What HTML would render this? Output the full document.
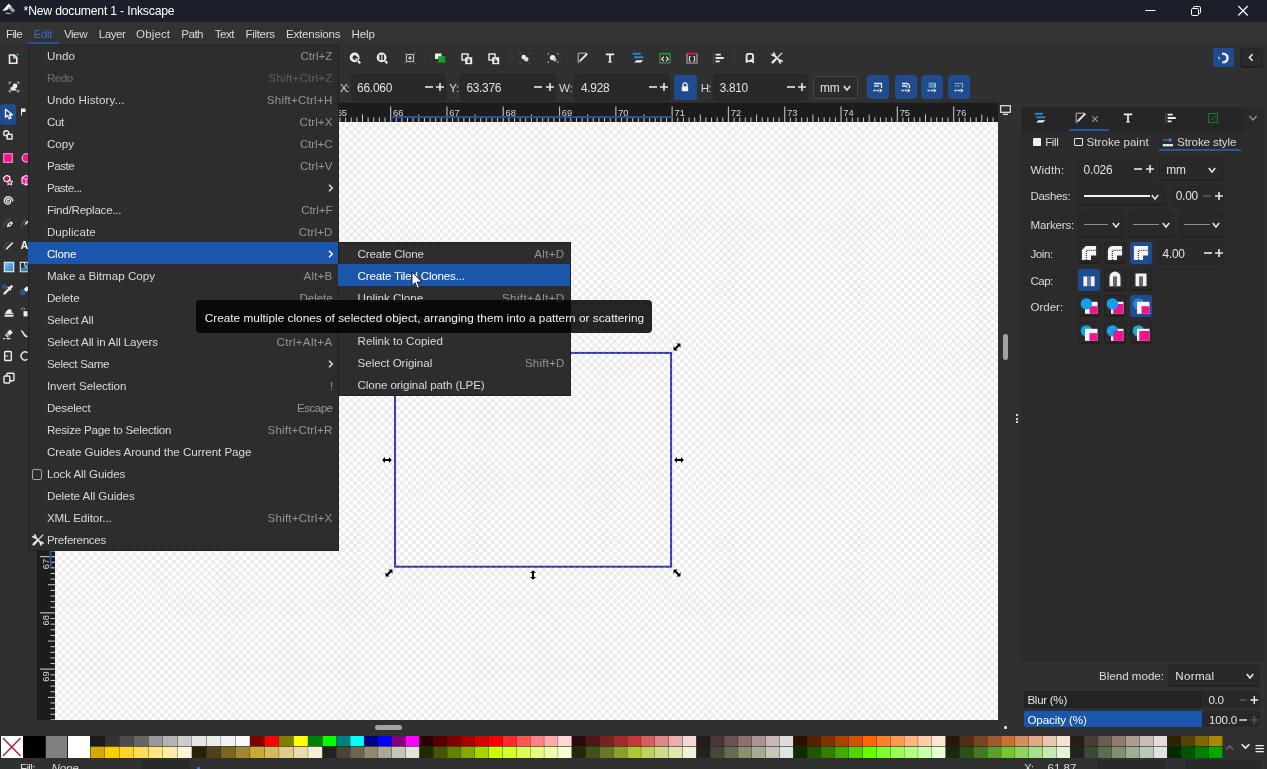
<!DOCTYPE html>
<html><head><meta charset="utf-8"><title>*New document 1 - Inkscape</title>
<style>
html,body{margin:0;padding:0;background:#303030;}
body{width:1267px;height:769px;overflow:hidden;position:relative;font-family:"Liberation Sans",sans-serif;}
#r{position:absolute;left:0;top:0;width:1267px;height:769px;overflow:hidden;background:#303030;will-change:transform;}
#r div,#r span,#r svg{position:absolute;box-sizing:border-box;}
.t{white-space:nowrap;}
</style></head><body><div id="r">
<div style="left:0px;top:0px;width:1267px;height:22px;background:#1b1f2a;"></div>
<span class="t" style="left:23.60px;top:3.30px;font-size:12.2px;line-height:16px;color:#ffffff;letter-spacing:-0.191px;">*New document 1 - Inkscape</span>
<svg style="left:1140px;top:0" width="127" height="22" viewBox="0 0 127 22"><path d="M5.500 10.500h10" stroke="#fff" stroke-width="1" fill="none"/><rect x="51.500" y="8.500" width="7" height="7" rx="1.200" stroke="#fff" stroke-width="1" fill="none"/><path d="M53.500 8.500v-0.800a1.200 1.200 0 0 1 1.200 -1.200h4.600a1.200 1.200 0 0 1 1.200 1.200v4.600a1.200 1.200 0 0 1 -1.200 1.200h-0.800" stroke="#fff" stroke-width="1" fill="none"/><path d="M98.300 6l9.500 9.500M107.800 6l-9.500 9.500" stroke="#fff" stroke-width="1.100" fill="none"/></svg>
<svg style="left:0px;top:0px" width="20" height="20" viewBox="0 0 20 20"><path d="M8.800 3.800L2.700 10.200Q2.400 10.900 3.400 10.800L6.600 10.300L8.800 8.400Z" fill="#f4f6f8"/><path d="M8.800 3.800L15.200 10.400Q15.500 11.300 14.400 11.400L12 12L8.800 8.400Z" fill="#98a3b3"/><path d="M8.800 3.800L11.800 7L10.400 6.600L9.400 7.800L8.200 6.600L6.800 7.400L6 6.800Z" fill="#ffffff"/><path d="M5.600 13.300Q8 12.700 10.500 13.800" stroke="#dfe3e8" stroke-width="0.900" fill="none"/><path d="M11 13.200L13.400 12.600" stroke="#5d6878" stroke-width="0.800" fill="none"/></svg>
<div style="left:0px;top:22px;width:1267px;height:23px;background:#333333;"></div>
<span class="t" style="left:6.00px;top:26.30px;font-size:11.6px;line-height:16px;color:#d9d9d9;letter-spacing:-0.648px;">File</span>
<span class="t" style="left:33.50px;top:26.30px;font-size:11.6px;line-height:16px;color:#3a6cbd;letter-spacing:-0.347px;">Edit</span>
<span class="t" style="left:63.90px;top:26.30px;font-size:11.6px;line-height:16px;color:#d9d9d9;letter-spacing:-0.434px;">View</span>
<span class="t" style="left:98.70px;top:26.30px;font-size:11.6px;line-height:16px;color:#d9d9d9;letter-spacing:-0.444px;">Layer</span>
<span class="t" style="left:136.00px;top:26.30px;font-size:11.6px;line-height:16px;color:#d9d9d9;letter-spacing:0.112px;">Object</span>
<span class="t" style="left:181.30px;top:26.30px;font-size:11.6px;line-height:16px;color:#d9d9d9;letter-spacing:-0.541px;">Path</span>
<span class="t" style="left:214.80px;top:26.30px;font-size:11.6px;line-height:16px;color:#d9d9d9;letter-spacing:-0.544px;">Text</span>
<span class="t" style="left:245.50px;top:26.30px;font-size:11.6px;line-height:16px;color:#d9d9d9;letter-spacing:-0.340px;">Filters</span>
<span class="t" style="left:286.00px;top:26.30px;font-size:11.6px;line-height:16px;color:#d9d9d9;letter-spacing:-0.254px;">Extensions</span>
<span class="t" style="left:351.50px;top:26.30px;font-size:11.6px;line-height:16px;color:#d9d9d9;letter-spacing:-0.114px;">Help</span>
<div style="left:28.4px;top:42.1px;width:30.4px;height:1.7px;background:#23529f;"></div>
<div style="left:37px;top:103px;width:961.4px;height:19px;background:#1c1c1c;"></div>
<div style="left:37px;top:103px;width:18px;height:617px;background:#1c1c1c;"></div>
<div style="left:55px;top:122px;width:943.4px;height:598px;background-color:#fdfdfd;background-image:conic-gradient(#ebebeb 25%,#fdfdfd 0 50%,#ebebeb 0 75%,#fdfdfd 0);background-size:7.890px 7.890px;background-position:2.700px 4.600px"></div>
<svg style="left:37px;top:103px" width="961.4" height="19" viewBox="37 103 961.4 19"><path d="M41.59 117.500V122M47.22 117.500V122M58.48 117.500V122M64.11 117.500V122M69.74 117.500V122M75.37 117.500V122M86.63 117.500V122M92.26 117.500V122M97.89 117.500V122M103.52 117.500V122M114.78 117.500V122M120.41 117.500V122M126.04 117.500V122M131.67 117.500V122M142.93 117.500V122M148.56 117.500V122M154.19 117.500V122M159.82 117.500V122M171.08 117.500V122M176.71 117.500V122M182.34 117.500V122M187.97 117.500V122M199.23 117.500V122M204.86 117.500V122M210.49 117.500V122M216.12 117.500V122M227.38 117.500V122M233.01 117.500V122M238.64 117.500V122M244.27 117.500V122M255.53 117.500V122M261.16 117.500V122M266.79 117.500V122M272.42 117.500V122M283.68 117.500V122M289.31 117.500V122M294.94 117.500V122M300.57 117.500V122M311.83 117.500V122M317.46 117.500V122M323.09 117.500V122M328.72 117.500V122M339.98 117.500V122M345.61 117.500V122M351.24 117.500V122M356.87 117.500V122M368.13 117.500V122M373.76 117.500V122M379.39 117.500V122M385.02 117.500V122M396.28 117.500V122M401.91 117.500V122M407.54 117.500V122M413.17 117.500V122M424.43 117.500V122M430.06 117.500V122M435.69 117.500V122M441.32 117.500V122M452.58 117.500V122M458.21 117.500V122M463.84 117.500V122M469.47 117.500V122M480.73 117.500V122M486.36 117.500V122M491.99 117.500V122M497.62 117.500V122M508.88 117.500V122M514.51 117.500V122M520.14 117.500V122M525.77 117.500V122M537.03 117.500V122M542.66 117.500V122M548.29 117.500V122M553.92 117.500V122M565.18 117.500V122M570.81 117.500V122M576.44 117.500V122M582.07 117.500V122M593.33 117.500V122M598.96 117.500V122M604.59 117.500V122M610.22 117.500V122M621.48 117.500V122M627.11 117.500V122M632.74 117.500V122M638.37 117.500V122M649.63 117.500V122M655.26 117.500V122M660.89 117.500V122M666.52 117.500V122M677.78 117.500V122M683.41 117.500V122M689.04 117.500V122M694.67 117.500V122M705.93 117.500V122M711.56 117.500V122M717.19 117.500V122M722.82 117.500V122M734.08 117.500V122M739.71 117.500V122M745.34 117.500V122M750.97 117.500V122M762.23 117.500V122M767.86 117.500V122M773.49 117.500V122M779.12 117.500V122M790.38 117.500V122M796.01 117.500V122M801.64 117.500V122M807.27 117.500V122M818.53 117.500V122M824.16 117.500V122M829.79 117.500V122M835.42 117.500V122M846.68 117.500V122M852.31 117.500V122M857.94 117.500V122M863.57 117.500V122M874.83 117.500V122M880.46 117.500V122M886.09 117.500V122M891.72 117.500V122M902.98 117.500V122M908.61 117.500V122M914.24 117.500V122M919.87 117.500V122M931.13 117.500V122M936.76 117.500V122M942.39 117.500V122M948.02 117.500V122M959.28 117.500V122M964.91 117.500V122M970.54 117.500V122M976.17 117.500V122M987.43 117.500V122M993.06 117.500V122" stroke="#cdcdcd" stroke-width="1"/><path d="M81.00 114.500V122M137.30 114.500V122M193.60 114.500V122M249.90 114.500V122M306.20 114.500V122M362.50 114.500V122M418.80 114.500V122M475.10 114.500V122M531.40 114.500V122M587.70 114.500V122M644.00 114.500V122M700.30 114.500V122M756.60 114.500V122M812.90 114.500V122M869.20 114.500V122M925.50 114.500V122M981.80 114.500V122" stroke="#cdcdcd" stroke-width="1"/><path d="M52.85 106.500V122M109.15 106.500V122M165.45 106.500V122M221.75 106.500V122M278.05 106.500V122M334.35 106.500V122M390.65 106.500V122M446.95 106.500V122M503.25 106.500V122M559.55 106.500V122M615.85 106.500V122M672.15 106.500V122M728.45 106.500V122M784.75 106.500V122M841.05 106.500V122M897.35 106.500V122M953.65 106.500V122" stroke="#b4b4b4" stroke-width="1.200"/><path d="M391.500 117H672.500" stroke="#27509f" stroke-width="2"/><text x="55.15" y="115.600" font-family="Liberation Sans, sans-serif" font-size="9.400" fill="#d6d6d6">60</text><text x="111.45" y="115.600" font-family="Liberation Sans, sans-serif" font-size="9.400" fill="#d6d6d6">61</text><text x="167.75" y="115.600" font-family="Liberation Sans, sans-serif" font-size="9.400" fill="#d6d6d6">62</text><text x="224.05" y="115.600" font-family="Liberation Sans, sans-serif" font-size="9.400" fill="#d6d6d6">63</text><text x="280.35" y="115.600" font-family="Liberation Sans, sans-serif" font-size="9.400" fill="#d6d6d6">64</text><text x="336.65" y="115.600" font-family="Liberation Sans, sans-serif" font-size="9.400" fill="#d6d6d6">65</text><text x="392.95" y="115.600" font-family="Liberation Sans, sans-serif" font-size="9.400" fill="#d6d6d6">66</text><text x="449.25" y="115.600" font-family="Liberation Sans, sans-serif" font-size="9.400" fill="#d6d6d6">67</text><text x="505.55" y="115.600" font-family="Liberation Sans, sans-serif" font-size="9.400" fill="#d6d6d6">68</text><text x="561.85" y="115.600" font-family="Liberation Sans, sans-serif" font-size="9.400" fill="#d6d6d6">69</text><text x="618.15" y="115.600" font-family="Liberation Sans, sans-serif" font-size="9.400" fill="#d6d6d6">70</text><text x="674.45" y="115.600" font-family="Liberation Sans, sans-serif" font-size="9.400" fill="#d6d6d6">71</text><text x="730.75" y="115.600" font-family="Liberation Sans, sans-serif" font-size="9.400" fill="#d6d6d6">72</text><text x="787.05" y="115.600" font-family="Liberation Sans, sans-serif" font-size="9.400" fill="#d6d6d6">73</text><text x="843.35" y="115.600" font-family="Liberation Sans, sans-serif" font-size="9.400" fill="#d6d6d6">74</text><text x="899.65" y="115.600" font-family="Liberation Sans, sans-serif" font-size="9.400" fill="#d6d6d6">75</text><text x="955.95" y="115.600" font-family="Liberation Sans, sans-serif" font-size="9.400" fill="#d6d6d6">76</text></svg>
<svg style="left:37px;top:122px" width="18" height="598" viewBox="37 122 18 598"><path d="M50.500 123.09H55M50.500 128.72H55M50.500 139.98H55M50.500 145.61H55M50.500 151.24H55M50.500 156.87H55M50.500 168.13H55M50.500 173.76H55M50.500 179.39H55M50.500 185.02H55M50.500 196.28H55M50.500 201.91H55M50.500 207.54H55M50.500 213.17H55M50.500 224.43H55M50.500 230.06H55M50.500 235.69H55M50.500 241.32H55M50.500 252.58H55M50.500 258.21H55M50.500 263.84H55M50.500 269.47H55M50.500 280.73H55M50.500 286.36H55M50.500 291.99H55M50.500 297.62H55M50.500 308.88H55M50.500 314.51H55M50.500 320.14H55M50.500 325.77H55M50.500 337.03H55M50.500 342.66H55M50.500 348.29H55M50.500 353.92H55M50.500 365.18H55M50.500 370.81H55M50.500 376.44H55M50.500 382.07H55M50.500 393.33H55M50.500 398.96H55M50.500 404.59H55M50.500 410.22H55M50.500 421.48H55M50.500 427.11H55M50.500 432.74H55M50.500 438.37H55M50.500 449.63H55M50.500 455.26H55M50.500 460.89H55M50.500 466.52H55M50.500 477.78H55M50.500 483.41H55M50.500 489.04H55M50.500 494.67H55M50.500 505.93H55M50.500 511.56H55M50.500 517.19H55M50.500 522.82H55M50.500 534.08H55M50.500 539.71H55M50.500 545.34H55M50.500 550.97H55M50.500 562.23H55M50.500 567.86H55M50.500 573.49H55M50.500 579.12H55M50.500 590.38H55M50.500 596.01H55M50.500 601.64H55M50.500 607.27H55M50.500 618.53H55M50.500 624.16H55M50.500 629.79H55M50.500 635.42H55M50.500 646.68H55M50.500 652.31H55M50.500 657.94H55M50.500 663.57H55M50.500 674.83H55M50.500 680.46H55M50.500 686.09H55M50.500 691.72H55M50.500 702.98H55M50.500 708.61H55M50.500 714.24H55M50.500 719.87H55" stroke="#cdcdcd" stroke-width="1"/><path d="M48 134.35H55M48 190.65H55M48 246.95H55M48 303.25H55M48 359.55H55M48 415.85H55M48 472.15H55M48 528.45H55M48 584.75H55M48 641.05H55M48 697.35H55" stroke="#cdcdcd" stroke-width="1"/><path d="M40 162.50H55M40 218.80H55M40 275.10H55M40 331.40H55M40 387.70H55M40 444.00H55M40 500.30H55M40 556.60H55M40 612.90H55M40 669.20H55" stroke="#b4b4b4" stroke-width="1.200"/><path d="M50.500 353V567" stroke="#27509f" stroke-width="2"/><text transform="translate(49.200 175.10) rotate(-90)" font-family="Liberation Sans, sans-serif" font-size="9.400" fill="#d6d6d6">60</text><text transform="translate(49.200 231.40) rotate(-90)" font-family="Liberation Sans, sans-serif" font-size="9.400" fill="#d6d6d6">61</text><text transform="translate(49.200 287.70) rotate(-90)" font-family="Liberation Sans, sans-serif" font-size="9.400" fill="#d6d6d6">62</text><text transform="translate(49.200 344.00) rotate(-90)" font-family="Liberation Sans, sans-serif" font-size="9.400" fill="#d6d6d6">63</text><text transform="translate(49.200 400.30) rotate(-90)" font-family="Liberation Sans, sans-serif" font-size="9.400" fill="#d6d6d6">64</text><text transform="translate(49.200 456.60) rotate(-90)" font-family="Liberation Sans, sans-serif" font-size="9.400" fill="#d6d6d6">65</text><text transform="translate(49.200 512.90) rotate(-90)" font-family="Liberation Sans, sans-serif" font-size="9.400" fill="#d6d6d6">66</text><text transform="translate(49.200 569.20) rotate(-90)" font-family="Liberation Sans, sans-serif" font-size="9.400" fill="#d6d6d6">67</text><text transform="translate(49.200 625.50) rotate(-90)" font-family="Liberation Sans, sans-serif" font-size="9.400" fill="#d6d6d6">68</text><text transform="translate(49.200 681.80) rotate(-90)" font-family="Liberation Sans, sans-serif" font-size="9.400" fill="#d6d6d6">69</text></svg>
<svg style="left:380px;top:340px" width="310" height="245" viewBox="380 340 310 245"><rect x="395.05" y="352.9" width="276.05" height="213.80" fill="none" stroke="#4246bd" stroke-width="2"/><rect x="395.05" y="352.9" width="276.05" height="213.80" fill="none" stroke="#26288f" stroke-width="1" stroke-dasharray="3 3"/></svg>
<svg style="left:670px;top:340px" width="14" height="14" viewBox="-7 -7 14 14"><g transform="rotate(-45)"><path d="M-4.800 0L-2.100 -3V-1H2.100V-3L4.800 0L2.100 3V1H-2.100V3Z" fill="#000"/></g></svg>
<svg style="left:382.3px;top:565.6px" width="14" height="14" viewBox="-7 -7 14 14"><g transform="rotate(-45)"><path d="M-4.800 0L-2.100 -3V-1H2.100V-3L4.800 0L2.100 3V1H-2.100V3Z" fill="#000"/></g></svg>
<svg style="left:670.3px;top:565.6px" width="14" height="14" viewBox="-7 -7 14 14"><g transform="rotate(45)"><path d="M-4.800 0L-2.100 -3V-1H2.100V-3L4.800 0L2.100 3V1H-2.100V3Z" fill="#000"/></g></svg>
<svg style="left:380.4px;top:452.8px" width="14" height="14" viewBox="-7 -7 14 14"><g transform="rotate(0)"><path d="M-4.800 0L-2.100 -3V-1H2.100V-3L4.800 0L2.100 3V1H-2.100V3Z" fill="#000"/></g></svg>
<svg style="left:672px;top:452.8px" width="14" height="14" viewBox="-7 -7 14 14"><g transform="rotate(0)"><path d="M-4.800 0L-2.100 -3V-1H2.100V-3L4.800 0L2.100 3V1H-2.100V3Z" fill="#000"/></g></svg>
<svg style="left:526px;top:567.9px" width="14" height="14" viewBox="-7 -7 14 14"><g transform="rotate(90)"><path d="M-4.800 0L-2.100 -3V-1H2.100V-3L4.800 0L2.100 3V1H-2.100V3Z" fill="#000"/></g></svg>
<div style="left:1002.8px;top:333.8px;width:5.4px;height:26.6px;background:#a2a2a2;border-radius:2.700px;"></div>
<div style="left:375.3px;top:724.9px;width:26.6px;height:5.2px;background:#a2a2a2;border-radius:2.600px;"></div>
<div style="left:1016px;top:414px;width:2px;height:2px;background:#d8d8d8;"></div>
<div style="left:1016px;top:417.5px;width:2px;height:2px;background:#d8d8d8;"></div>
<div style="left:1016px;top:421px;width:2px;height:2px;background:#d8d8d8;"></div>
<div style="left:1004.2px;top:726px;width:2.6px;height:2.6px;background:#ededed;border-radius:1.300px;"></div>
<svg style="left:1000px;top:105px" width="12" height="11" viewBox="0 0 12 11"><rect x="0.700" y="0.700" width="9.600" height="6.600" fill="none" stroke="#e8e8e8" stroke-width="1.200"/><path d="M3 9.300h5" stroke="#e8e8e8" stroke-width="1.300"/></svg>
<svg style="left:347.0px;top:50.0px" width="16" height="16" viewBox="-8.0 -8.0 16 16"><circle cx="-0.400" cy="-0.600" r="4.900" fill="#ececec"/><path d="M3 3L5.300 5.300" stroke="#ececec" stroke-width="2"/><circle cx="-0.200" cy="-0.500" r="2.300" fill="#303030"/><path d="M-0.200 -0.800h3.200v3h-3.200z" fill="#303030"/><path d="M0.500 0.300h2v1.600h-2z" fill="#ececec"/></svg>
<svg style="left:374.0px;top:50.0px" width="16" height="16" viewBox="-8.0 -8.0 16 16"><circle cx="-0.400" cy="-0.600" r="4.900" fill="#ececec"/><path d="M3 3L5.300 5.300" stroke="#ececec" stroke-width="2"/><path d="M-2.600 -3.200h1.900v5.200h-1.900zM0.400 -3.200h1.700v5.200h-1.700z" fill="#303030"/></svg>
<svg style="left:401.8px;top:50.0px" width="16" height="16" viewBox="-8.0 -8.0 16 16"><rect x="-3.600" y="-3.600" width="7.200" height="7.200" fill="none" stroke="#cfcfcf" stroke-width="1"/><path d="M-5.500 -5.500l1.800 1.800M5.500 -5.500l-1.800 1.800M-5.500 5.500l1.800 -1.800M5.500 5.500l-1.800 -1.800" stroke="#6c6c6c" stroke-width="1"/><path d="M-1.800 0H1.800M0 -1.800V1.800" stroke="#f0f0f0" stroke-width="1.200"/></svg>
<svg style="left:432.0px;top:50.0px" width="16" height="16" viewBox="-8.0 -8.0 16 16"><rect x="-5" y="-4.500" width="6.500" height="5.500" fill="#f0f0f0"/><rect x="-1.800" y="-1.800" width="7" height="6.500" fill="#17a023"/></svg>
<svg style="left:459.0px;top:50.5px" width="16" height="16" viewBox="-8.0 -8.0 16 16"><rect x="-5" y="-5" width="6" height="6" fill="none" stroke="#ececec" stroke-width="1.400"/><rect x="-1.800" y="-1.800" width="7" height="7" fill="#ececec"/><rect x="0.500" y="1.200" width="2.600" height="2.800" fill="#303030"/><path d="M0.700 1.200a1.100 1.300 0 0 1 2.200 0" stroke="#303030" stroke-width="0.800" fill="none"/></svg>
<svg style="left:486.0px;top:50.5px" width="16" height="16" viewBox="-8.0 -8.0 16 16"><rect x="-5" y="-5" width="6" height="6" fill="none" stroke="#ececec" stroke-width="1.400"/><rect x="-1.800" y="-1.800" width="7" height="7" fill="#ececec"/><rect x="0.300" y="1.400" width="3" height="2.600" fill="#303030"/><path d="M0.200 0.200h1.600v1.200" stroke="#303030" stroke-width="0.800" fill="none"/></svg>
<svg style="left:517.0px;top:50.0px" width="16" height="16" viewBox="-8.0 -8.0 16 16"><path d="M-5.200 -3.500v-1.700h1.700M5.200 -3.500v-1.700h-1.700M-5.200 3.500v1.700h1.700M5.200 3.500v1.700h-1.700" stroke="#1f6a2c" stroke-width="1.100" fill="none"/><circle cx="-1.300" cy="-0.900" r="2.300" fill="#ececec"/><circle cx="1.300" cy="1.300" r="2.200" fill="#dcdcdc"/></svg>
<svg style="left:544.5px;top:50.0px" width="16" height="16" viewBox="-8.0 -8.0 16 16"><path d="M-4.800 -3.500v-1.300h1.300M4.800 -3.500v-1.300h-1.300M-4.800 3.500v1.300h1.300M4.800 3.500v1.300h-1.300" stroke="#c8c8c8" stroke-width="1.300" fill="none" stroke-dasharray="1.300 1.300"/><circle cx="-0.400" cy="-0.400" r="2.700" fill="#ececec"/><circle cx="1.800" cy="1.800" r="1.800" fill="#bdbdbd"/></svg>
<svg style="left:575.0px;top:50.0px" width="16" height="16" viewBox="-8.0 -8.0 16 16"><path d="M-4.800 4V-4.800H4" stroke="#b8b8b8" stroke-width="1" fill="none"/><path d="M-3.600 3.600L4.300 -4.300" stroke="#ececec" stroke-width="1.900"/><path d="M-5 5L-2.800 2.800" stroke="#2d8ad8" stroke-width="1.800"/></svg>
<svg style="left:602.0px;top:50.0px" width="16" height="16" viewBox="-8.0 -8.0 16 16"><path d="M-4.200 -4.500H4.200V-2.800H0.900V3.600H2V4.600H-2V3.600H-0.900V-2.800H-4.200Z" fill="#ececec"/></svg>
<svg style="left:630.0px;top:50.0px" width="16" height="16" viewBox="-8.0 -8.0 16 16"><path d="M-4.500 -4.300H2" stroke="#2a86cc" stroke-width="2" stroke-linecap="round"/><path d="M-3 -0.800H4.500" stroke="#2a86cc" stroke-width="2" stroke-linecap="round"/><path d="M-1.500 2.300L5.300 2.300L3 4.600L-3.800 4.600Z" fill="#f0f0f0"/></svg>
<svg style="left:657.0px;top:50.0px" width="16" height="16" viewBox="-8.0 -8.0 16 16"><rect x="-5" y="-4.500" width="10" height="9.500" fill="none" stroke="#4a9a55" stroke-width="1"/><path d="M-5 -4.300H5" stroke="#19a028" stroke-width="1.800"/><path d="M-1.200 -1.300L-3.200 0.900L-1.200 3.100M1.200 -1.300L3.200 0.900L1.200 3.100" stroke="#f0f0f0" stroke-width="1.100" fill="none"/></svg>
<svg style="left:683.5px;top:50.0px" width="16" height="16" viewBox="-8.0 -8.0 16 16"><rect x="-5" y="-4.500" width="10" height="9.500" fill="none" stroke="#c9a9b4" stroke-width="1"/><path d="M-5 -4.300H5" stroke="#e8124f" stroke-width="1.800"/><path d="M-1.300 -1.500H-2.600V3.200H-1.300M1.300 -1.500H2.600V3.200H1.300" stroke="#e8e8e8" stroke-width="1" fill="none"/></svg>
<svg style="left:711.0px;top:50.0px" width="16" height="16" viewBox="-8.0 -8.0 16 16"><path d="M-5.300 -5.500V5.500" stroke="#1f6a2c" stroke-width="1"/><path d="M-3.400 -3.400H1.800M-3.400 0H4.800M-3.400 3.400H0.600" stroke="#ececec" stroke-width="1.800"/></svg>
<svg style="left:741.5px;top:50.0px" width="16" height="16" viewBox="-8.0 -8.0 16 16"><rect x="-3.400" y="-4.200" width="6.400" height="7.400" rx="1.600" fill="none" stroke="#ececec" stroke-width="1.800"/><path d="M0.600 1.400L3.900 4.900" stroke="#ececec" stroke-width="1.800"/><path d="M-3.400 2.500V4.800" stroke="#ececec" stroke-width="1.800"/></svg>
<svg style="left:769.5px;top:51.0px" width="14" height="14" viewBox="-7.0 -7.0 14 14"><path d="M-3.400 -3.400L3.400 3.400" stroke="#ececec" stroke-width="1.700"/><circle cx="-3.700" cy="-3.700" r="2.100" fill="#ececec"/><path d="M-3.900 -3.900L-6.500 -5.200L-5.200 -6.500Z" fill="#303030" stroke="#303030" stroke-width="0.900"/><circle cx="3.700" cy="3.700" r="2.100" fill="#ececec"/><path d="M3.900 3.900L6.500 5.200L5.200 6.500Z" fill="#303030" stroke="#303030" stroke-width="0.900"/><path d="M4.800 -4.800L0.800 -0.800" stroke="#ececec" stroke-width="1.200" stroke-linecap="round"/><path d="M-1.300 1.300L-4.400 4.400" stroke="#ececec" stroke-width="2.300" stroke-linecap="round"/></svg>
<div style="left:1212.5px;top:47.5px;width:21.5px;height:19.5px;background:#1f4c91;border-radius:3px;"></div>
<svg style="left:1215.5px;top:49.6px" width="16" height="16" viewBox="-8.0 -8.0 16 16"><path d="M-0.800 -4.300A4.300 4.300 0 0 1 -0.800 4.300" stroke="#ececec" stroke-width="2.500" fill="none"/><path d="M-0.800 4.300h-1.200" stroke="#9cc4f0" stroke-width="2.500"/><path d="M-0.800 -4.300h-1.200" stroke="#ececec" stroke-width="2.500"/><path d="M-4.300 -0.900h-1.300v1h1.300v1h-1.300" stroke="#dfe8f5" stroke-width="0.700" fill="none"/></svg>
<div style="left:1239.5px;top:47.5px;width:23px;height:20.5px;background:#2a2a2a;border-radius:3px;border:1px solid #232323;border-bottom:2px solid #212121;"></div>
<svg style="left:1246px;top:52.300px" width="10" height="11" viewBox="-5 -5.500 10 11"><path d="M1.600 -3.200L-1.600 0L1.600 3.200" stroke="#f0f0f0" stroke-width="1.500" fill="none"/></svg>
<span class="t" style="left:340.00px;top:79.50px;font-size:11.6px;line-height:16px;color:#d9d9d9;letter-spacing:-1.230px;">X:</span>
<div style="left:350.5px;top:74px;width:95.0px;height:27px;background:#292929;border-radius:4px;border:1px solid #262626;"></div>
<span class="t" style="left:357.00px;top:79.50px;font-size:11.9px;line-height:16px;color:#e2e2e2;letter-spacing:-0.200px;">66.060</span>
<svg style="left:424px;top:82.2px" width="10" height="10" viewBox="-5 -5 10 10"><path d="M-4 0H4" stroke="#e6e6e6" stroke-width="1.600"/></svg>
<svg style="left:435.2px;top:82.2px" width="10" height="10" viewBox="-5 -5 10 10"><path d="M-4 0H4M0 -4V4" stroke="#e6e6e6" stroke-width="1.600"/></svg>
<span class="t" style="left:449.30px;top:79.50px;font-size:11.6px;line-height:16px;color:#d9d9d9;letter-spacing:-0.510px;">Y:</span>
<div style="left:460px;top:74px;width:95.5px;height:27px;background:#292929;border-radius:4px;border:1px solid #262626;"></div>
<span class="t" style="left:466.40px;top:79.50px;font-size:11.9px;line-height:16px;color:#e2e2e2;letter-spacing:-0.266px;">63.376</span>
<svg style="left:533.2px;top:82.2px" width="10" height="10" viewBox="-5 -5 10 10"><path d="M-4 0H4" stroke="#e6e6e6" stroke-width="1.600"/></svg>
<svg style="left:545px;top:82.2px" width="10" height="10" viewBox="-5 -5 10 10"><path d="M-4 0H4M0 -4V4" stroke="#e6e6e6" stroke-width="1.600"/></svg>
<span class="t" style="left:559.00px;top:79.50px;font-size:11.6px;line-height:16px;color:#d9d9d9;letter-spacing:-0.231px;">W:</span>
<div style="left:574.3px;top:74px;width:95.5px;height:27px;background:#292929;border-radius:4px;border:1px solid #262626;"></div>
<span class="t" style="left:581.00px;top:79.50px;font-size:11.9px;line-height:16px;color:#e2e2e2;letter-spacing:-0.276px;">4.928</span>
<svg style="left:647.5px;top:82.2px" width="10" height="10" viewBox="-5 -5 10 10"><path d="M-4 0H4" stroke="#e6e6e6" stroke-width="1.600"/></svg>
<svg style="left:659px;top:82.2px" width="10" height="10" viewBox="-5 -5 10 10"><path d="M-4 0H4M0 -4V4" stroke="#e6e6e6" stroke-width="1.600"/></svg>
<div style="left:673.5px;top:74.5px;width:23px;height:25px;background:#1f4c91;border-radius:3px;"></div>
<svg style="left:677.0px;top:79.3px" width="16" height="16" viewBox="-8.0 -8.0 16 16"><rect x="-3.200" y="-0.800" width="6.400" height="5" rx="0.700" fill="#f4f4f4"/><path d="M-2 -0.500V-2.200a2 2 0 0 1 4 0V-0.500" stroke="#f4f4f4" stroke-width="1.300" fill="none"/></svg>
<span class="t" style="left:700.80px;top:79.50px;font-size:11.6px;line-height:16px;color:#d9d9d9;letter-spacing:-0.850px;">H:</span>
<div style="left:713.3px;top:74px;width:94.5px;height:27px;background:#292929;border-radius:4px;border:1px solid #262626;"></div>
<span class="t" style="left:719.70px;top:79.50px;font-size:11.9px;line-height:16px;color:#e2e2e2;letter-spacing:-0.356px;">3.810</span>
<svg style="left:786.1px;top:82.2px" width="10" height="10" viewBox="-5 -5 10 10"><path d="M-4 0H4" stroke="#e6e6e6" stroke-width="1.600"/></svg>
<svg style="left:797.3px;top:82.2px" width="10" height="10" viewBox="-5 -5 10 10"><path d="M-4 0H4M0 -4V4" stroke="#e6e6e6" stroke-width="1.600"/></svg>
<div style="left:812.8px;top:75.5px;width:45.5px;height:23.5px;background:#2b2b2b;border-radius:4px;border:1px solid #484848;"></div>
<span class="t" style="left:819.90px;top:80.00px;font-size:11.9px;line-height:16px;color:#e2e2e2;letter-spacing:0.037px;">mm</span>
<svg style="left:841.2px;top:83.3px" width="12" height="10" viewBox="-6 -5 12 10"><path d="M-3.2 -1.9L0 1.9L3.2 -1.9" stroke="#e6e6e6" stroke-width="1.6" fill="none"/></svg>
<div style="left:867px;top:74.7px;width:22px;height:24.3px;background:#1f4c91;border-radius:4px;"></div>
<svg style="left:870.0px;top:79.0px" width="16" height="16" viewBox="-8.0 -8.0 16 16"><path d="M-4 -3.500H3.500V1" stroke="#ececec" stroke-width="1.300" fill="none"/><path d="M-4 -1H1" stroke="#ececec" stroke-width="1.300"/><path d="M-4.500 3.500H1.800" stroke="#ececec" stroke-width="1.300" stroke-dasharray="2.200 1"/><path d="M1.600 1.500L4.600 3.500L1.600 5.500Z" fill="#ececec"/></svg>
<div style="left:894.5px;top:74.7px;width:22px;height:24.3px;background:#1f4c91;border-radius:4px;"></div>
<svg style="left:897.5px;top:79.0px" width="16" height="16" viewBox="-8.0 -8.0 16 16"><path d="M-4 -3.500H0.500a3 3 0 0 1 3 3V1" stroke="#ececec" stroke-width="1.300" fill="none"/><path d="M-4 -1H-0.500a1.500 1.500 0 0 1 1.500 1.500" stroke="#ececec" stroke-width="1.300" fill="none"/><path d="M-4.500 3.500H1.800" stroke="#ececec" stroke-width="1.300" stroke-dasharray="2.200 1"/><path d="M1.600 1.500L4.600 3.500L1.600 5.500Z" fill="#ececec"/></svg>
<div style="left:921.2px;top:74.7px;width:22px;height:24.3px;background:#1f4c91;border-radius:4px;"></div>
<svg style="left:924.2px;top:79.0px" width="16" height="16" viewBox="-8.0 -8.0 16 16"><path d="M-3.500 -3.800H3.200M-3.500 -1.900H3.200M-3.500 0H3.200" stroke="#8fd0ee" stroke-width="0.900" fill="none"/><path d="M3.200 -3.800V0.500" stroke="#e0e8f4" stroke-width="1"/><path d="M-4.500 3.500H1.800" stroke="#ececec" stroke-width="1.300" stroke-dasharray="2.200 1"/><path d="M1.600 1.500L4.600 3.500L1.600 5.500Z" fill="#ececec"/></svg>
<div style="left:948px;top:74.7px;width:22px;height:24.3px;background:#1f4c91;border-radius:4px;"></div>
<svg style="left:951.0px;top:79.0px" width="16" height="16" viewBox="-8.0 -8.0 16 16"><path d="M-4 -3.500H3.500V1M-4 -1H1" stroke="#b9cfee" stroke-width="1.100" stroke-dasharray="1.500 0.800" fill="none"/><path d="M-4.500 3.500H1.800" stroke="#ececec" stroke-width="1.300" stroke-dasharray="2.200 1"/><path d="M1.600 1.500L4.600 3.500L1.600 5.500Z" fill="#ececec"/></svg>
<div style="left:0px;top:101.5px;width:1021px;height:1.5px;background:#2a2a2a;"></div>
<svg style="left:5.300000000000001px;top:50.8px" width="16" height="16" viewBox="-8.0 -8.0 16 16"><path d="M-3.500 -4H1.200L3.800 -1.400V4.200H-3.500Z" fill="none" stroke="#ececec" stroke-width="1.600"/><path d="M0.800 -3.800V-1H3.600" stroke="#ececec" stroke-width="1.100" fill="none"/><circle cx="4.600" cy="-4.600" r="1.200" fill="#1fae30"/></svg>
<svg style="left:6.0px;top:78.6px" width="16" height="16" viewBox="-8.0 -8.0 16 16"><path d="M-4.800 -2.800V-4.800H-2.800M2.800 -4.800H4.800V-2.800M-4.800 2.800V4.800H-2.800M2.800 4.800H4.800V2.800" stroke="#c9c9c9" stroke-width="1" fill="none"/><circle cx="1" cy="-1" r="2.400" fill="#ececec"/><path d="M-3.500 3.500V0.500L-1 -0.500L3.500 3.500Z" fill="#ececec"/></svg>
<div style="left:0px;top:103.5px;width:16px;height:21px;background:#1f4c91;border-radius:3px;"></div>
<svg style="left:0.8000000000000007px;top:105.8px" width="16" height="16" viewBox="-8.0 -8.0 16 16"><path d="M-3.500 -4.800V3.200L-1.500 1.500L0.200 4.800L2 3.900L0.400 0.800H3.500Z" fill="none" stroke="#f4f4f4" stroke-width="1.400" stroke-linejoin="round"/></svg>
<svg style="left:15.5px;top:103.5px" width="16" height="16" viewBox="-8.0 -8.0 16 16"><rect x="-2.500" y="-3.500" width="4" height="3.500" fill="#ececec"/><path d="M-2.500 -3.500V3.500" stroke="#ececec" stroke-width="1"/></svg>
<svg style="left:0.40000000000000036px;top:127.0px" width="16" height="16" viewBox="-8.0 -8.0 16 16"><circle cx="-1.700" cy="-1.700" r="2.600" fill="none" stroke="#ececec" stroke-width="1.400"/><rect x="-0.800" y="-0.600" width="4.800" height="4.600" fill="#303030" stroke="#ececec" stroke-width="1.400"/></svg>
<svg style="left:0.40000000000000036px;top:149.5px" width="16" height="16" viewBox="-8.0 -8.0 16 16"><rect x="-4.300" y="-4.300" width="8.600" height="8.600" fill="#f0148c" stroke="#ff9fd0" stroke-width="1"/></svg>
<svg style="left:17.0px;top:149.5px" width="16" height="16" viewBox="-8.0 -8.0 16 16"><circle cx="1.300" cy="0" r="4.200" fill="#f0148c" stroke="#ffb4da" stroke-width="1.100"/></svg>
<svg style="left:0.40000000000000036px;top:171.8px" width="16" height="16" viewBox="-8.0 -8.0 16 16"><path d="M-1.500 -4.600L1.600 -3.400L2 -0.400L-0.300 1.800L-3.600 1L-4.600 -2.200Z" fill="#f0148c" fill-opacity="0.550" stroke="#ececec" stroke-width="1.200" stroke-linejoin="round"/><path d="M1.800 -0.800L2.700 1.200L4.900 1.400L3.300 2.900L3.800 5L1.800 3.900L-0.200 5L0.300 2.900L-1.300 1.400L0.900 1.200Z" fill="#f0148c" stroke="#ececec" stroke-width="1" stroke-linejoin="round"/></svg>
<svg style="left:17.0px;top:171.5px" width="16" height="16" viewBox="-8.0 -8.0 16 16"><path d="M-3 -2.500L1 -4.500L5 -2.500V3L1 5L-3 3Z" fill="#f0148c" stroke="#ffd0e8" stroke-width="1.200"/><path d="M-3 -2.500L1 -0.500L5 -2.500M1 -0.500V5" stroke="#ffd0e8" stroke-width="1" fill="none"/></svg>
<svg style="left:0.1999999999999993px;top:192.5px" width="16" height="16" viewBox="-8.0 -8.0 16 16"><path d="M0.50 0.34L0.47 0.48L0.40 0.62L0.29 0.75L0.15 0.86L-0.02 0.94L-0.22 0.98L-0.44 0.98L-0.67 0.93L-0.89 0.83L-1.09 0.67L-1.27 0.47L-1.40 0.22L-1.49 -0.07L-1.51 -0.38L-1.47 -0.70L-1.36 -1.01L-1.17 -1.31L-0.93 -1.58L-0.62 -1.79L-0.26 -1.95L0.13 -2.03L0.55 -2.03L0.97 -1.94L1.38 -1.77L1.75 -1.50L2.07 -1.16L2.33 -0.75L2.50 -0.28L2.57 0.22L2.54 0.75L2.41 1.27L2.16 1.76L1.81 2.21L1.37 2.58L0.86 2.87L0.28 3.05L-0.34 3.11L-0.97 3.05L-1.58 2.86L-2.16 2.54L-2.67 2.10L-3.10 1.57L-3.41 0.94L-3.60 0.25L-3.64 -0.47L-3.54 -1.20L-3.30 -1.92L-2.90 -2.57L-2.38 -3.15L-1.74 -3.62L-1.00 -3.96L-0.20 -4.15L0.63 -4.17L1.47 -4.03L2.27 -3.72L3.01 -3.25L3.64 -2.63L4.16 -1.89L4.51 -1.04L4.70 -0.13" fill="none" stroke="#ececec" stroke-width="1.400" stroke-linecap="round"/></svg>
<svg style="left:0.5px;top:215.5px" width="16" height="16" viewBox="-8.0 -8.0 16 16"><path d="M-5.500 2.500C-4.500 -1.500 -2 -4 1 -5" stroke="#1f7a2e" stroke-width="1.100" fill="none"/><path d="M-2.200 3.200L-1.200 -0.500L2.200 -2.800L4 -1L1.500 2.300Z" fill="#ececec"/><circle cx="0.900" cy="0.200" r="0.900" fill="#303030"/></svg>
<svg style="left:17.0px;top:215.5px" width="16" height="16" viewBox="-8.0 -8.0 16 16"><path d="M-4 3C-3 0 -1.500 -2.500 1 -4" stroke="#1f7a2e" stroke-width="1.100" fill="none"/><path d="M-0.500 1.500L0.500 -1.500L3 -3.500L4 -2Z" fill="#ececec"/></svg>
<svg style="left:0.5px;top:237.5px" width="16" height="16" viewBox="-8.0 -8.0 16 16"><path d="M-3.500 4L-2.500 1.800L3.300 -4L4.300 -3L-1.300 3Z" fill="#ececec"/><path d="M-5.500 2.500C-4.500 -0.500 -3 -2.500 -0.500 -4" stroke="#1f7a2e" stroke-width="1.100" fill="none"/></svg>
<span class="t" style="left:20.600px;top:237.20px;font-size:10.800px;line-height:16px;color:#f2f2f2;font-weight:bold;">A</span>
<svg style="left:0.5px;top:259.2px" width="16" height="16" viewBox="-8.0 -8.0 16 16"><defs><linearGradient id="gr1" x1="0" y1="0" x2="1" y2="1"><stop offset="0" stop-color="#7cc8f0"/><stop offset="1" stop-color="#2487d0"/></linearGradient></defs><rect x="-4.700" y="-4.700" width="9.400" height="9.400" fill="url(#gr1)" stroke="#f0f0f0" stroke-width="1.100"/></svg>
<svg style="left:17.0px;top:259.2px" width="16" height="16" viewBox="-8.0 -8.0 16 16"><rect x="-4.700" y="-4.700" width="9.400" height="9.400" fill="none" stroke="#f0f0f0" stroke-width="1.100"/><path d="M-4.200 0.500C-2 2.500 0.500 -1 1.500 -4.200H4.500V4.200H-4.200Z" fill="#2b86cc"/><path d="M-0.500 -4.500C-1 -1.500 1 0.500 2.500 1" stroke="#f0f0f0" stroke-width="1" fill="none"/></svg>
<svg style="left:0.3000000000000007px;top:281.5px" width="16" height="16" viewBox="-8.0 -8.0 16 16"><circle cx="-3.600" cy="-3.300" r="2.400" fill="#1d5a9a"/><path d="M-4.800 4.800L-4.200 2.600L0.300 -1.900L1.900 -0.300L-2.600 4.200Z" fill="#ececec"/><path d="M-0.300 -3L3 0.300" stroke="#ececec" stroke-width="1.500"/><path d="M1.500 -1.500L3.600 -3.600" stroke="#ececec" stroke-width="2.500" stroke-linecap="round"/></svg>
<svg style="left:17.0px;top:281.5px" width="16" height="16" viewBox="-8.0 -8.0 16 16"><path d="M-1.500 -0.500L1.800 -3.800L4.500 -1.200L1.200 2Z" fill="#ececec"/><circle cx="-2.400" cy="2.400" r="2.900" fill="#1d5a9a"/></svg>
<svg style="left:0.5px;top:304.5px" width="16" height="16" viewBox="-8.0 -8.0 16 16"><path d="M-4.400 3.800V0.400C-2.800 0.400 -2.600 -3.800 0.600 -3.800C3 -3.800 3.300 -1.200 2 -0.800C3.500 -0.600 4 0 4.400 0.400V3.800Z" fill="#ececec"/><path d="M-4.400 1.400H4.400" stroke="#303030" stroke-width="0.800"/></svg>
<svg style="left:17.0px;top:304.0px" width="16" height="16" viewBox="-8.0 -8.0 16 16"><rect x="-1.500" y="-0.800" width="4" height="5.200" fill="#ececec"/><path d="M-3.500 -4v2M-2 -4.500v2M-0.500 -4v2" stroke="#bdbdbd" stroke-width="0.900" stroke-dasharray="0.800 0.600"/></svg>
<svg style="left:0.3000000000000007px;top:325.5px" width="16" height="16" viewBox="-8.0 -8.0 16 16"><path d="M-1.200 -1.200L2 -4.400L4.800 -1.600L1.600 1.600Z" fill="#ececec"/><path d="M-3.400 1L-1.600 -0.800L1.200 2L-0.600 3.800Z" fill="#bdbdbd"/><path d="M-4.800 4.600H-3M-1.500 4.600H2.500" stroke="#ececec" stroke-width="1.100"/></svg>
<svg style="left:17.0px;top:325.5px" width="16" height="16" viewBox="-8.0 -8.0 16 16"><path d="M-4 -3C-1 -3.500 -2 3 2.500 2.500" stroke="#ececec" stroke-width="1.500" fill="none"/></svg>
<svg style="left:0.1999999999999993px;top:347.5px" width="16" height="16" viewBox="-8.0 -8.0 16 16"><rect x="-3.300" y="-4.500" width="6.600" height="9" rx="0.800" fill="none" stroke="#ececec" stroke-width="1.400"/><path d="M-2.800 0H0.300" stroke="#ececec" stroke-width="1"/></svg>
<svg style="left:17.0px;top:347.5px" width="16" height="16" viewBox="-8.0 -8.0 16 16"><path d="M2.500 -3.200A4 4 0 1 0 2.500 3.200" stroke="#ececec" stroke-width="1.400" fill="none"/></svg>
<svg style="left:0.5px;top:369.5px" width="16" height="16" viewBox="-8.0 -8.0 16 16"><rect x="-5" y="-2" width="5.800" height="7" rx="0.900" fill="none" stroke="#ececec" stroke-width="1.400"/><path d="M-2.200 -2.200V-3.800a1 1 0 0 1 1 -1H4a1 1 0 0 1 1 1V1.800a1 1 0 0 1 -1 1H1" fill="none" stroke="#ececec" stroke-width="1.400"/></svg>
<div style="left:424.3px;top:49px;width:1px;height:19px;background:#363636;"></div>
<div style="left:509.8px;top:49px;width:1px;height:19px;background:#363636;"></div>
<div style="left:567.3px;top:49px;width:1px;height:19px;background:#363636;"></div>
<div style="left:734.3px;top:49px;width:1px;height:19px;background:#363636;"></div>
<div style="left:1021px;top:107px;width:243px;height:553px;background:#2b2b2b;"></div>
<div style="left:1021px;top:107px;width:243px;height:23.5px;background:#262626;"></div>
<div style="left:1021px;top:130px;width:243px;height:1px;background:#222222;"></div>
<div style="left:1243px;top:107px;width:21px;height:23.5px;background:#2a2a2a;"></div>
<svg style="left:1032.0px;top:110.0px" width="16" height="16" viewBox="-8.0 -8.0 16 16"><path d="M-4.500 -4.300H2" stroke="#2a86cc" stroke-width="2" stroke-linecap="round"/><path d="M-3 -0.800H4.500" stroke="#2a86cc" stroke-width="2" stroke-linecap="round"/><path d="M-1.500 2.300L5.300 2.300L3 4.600L-3.800 4.600Z" fill="#f0f0f0"/></svg>
<svg style="left:1072.6px;top:109.5px" width="16" height="16" viewBox="-8.0 -8.0 16 16"><path d="M-4.800 4V-4.800H4" stroke="#b8b8b8" stroke-width="1" fill="none"/><path d="M-3.600 3.600L4.300 -4.300" stroke="#ececec" stroke-width="1.900"/><path d="M-5 5L-2.800 2.800" stroke="#2d8ad8" stroke-width="1.800"/></svg>
<svg style="left:1091px;top:114.500px" width="8" height="8" viewBox="-4 -4 8 8"><path d="M-2.600 -2.600L2.600 2.600M2.600 -2.600L-2.600 2.600" stroke="#9a9a9a" stroke-width="1.100"/></svg>
<div style="left:1069px;top:128.5px;width:40px;height:2px;background:#2555a3;"></div>
<svg style="left:1120.4px;top:110.0px" width="16" height="16" viewBox="-8.0 -8.0 16 16"><path d="M-4.200 -4.500H4.200V-2.800H0.900V3.600H2V4.600H-2V3.600H-0.900V-2.800H-4.200Z" fill="#ececec"/></svg>
<svg style="left:1163.0px;top:110.0px" width="16" height="16" viewBox="-8.0 -8.0 16 16"><path d="M-5.300 -5.500V5.500" stroke="#1f6a2c" stroke-width="1"/><path d="M-3.400 -3.400H1.800M-3.400 0H4.800M-3.400 3.400H0.600" stroke="#ececec" stroke-width="1.800"/></svg>
<svg style="left:1205.0px;top:110.0px" width="16" height="16" viewBox="-8.0 -8.0 16 16"><rect x="-4.500" y="-4.500" width="9" height="9" fill="none" stroke="#1d7527" stroke-width="1.100"/><rect x="-1.500" y="0.500" width="1.500" height="1.500" fill="#1d7527"/><rect x="1" y="-2" width="1.500" height="1.500" fill="#1d7527"/></svg>
<svg style="left:1247px;top:113px" width="12" height="10" viewBox="-6 -5 12 10"><path d="M-3.6 -2L0 2L3.6 -2" stroke="#8f8f8f" stroke-width="1.4" fill="none"/></svg>
<div style="left:1032.5px;top:137.5px;width:8.5px;height:8px;background:#f1f1f1;border-radius:1px;"></div>
<span class="t" style="left:1045.20px;top:134.20px;font-size:11.6px;line-height:16px;color:#d9d9d9;letter-spacing:-0.405px;">Fill</span>
<div style="left:1074.3px;top:137.5px;width:8.5px;height:8.5px;background:transparent;border:1.200px solid #e8e8e8;border-radius:1px;"></div>
<span class="t" style="left:1086.60px;top:134.20px;font-size:11.6px;line-height:16px;color:#d9d9d9;letter-spacing:0.016px;">Stroke paint</span>
<svg style="left:1162px;top:136.500px" width="12" height="11" viewBox="0 0 12 11"><path d="M1 3H5" stroke="#3a8fe0" stroke-width="1.300" stroke-dasharray="1.500 1"/><path d="M7.200 0.800L10.200 3L7.200 5.200Z" fill="#3a8fe0"/><path d="M5.500 3H8" stroke="#3a8fe0" stroke-width="1.200"/><path d="M0.800 8.200H11" stroke="#f0f0f0" stroke-width="2.200"/></svg>
<span class="t" style="left:1177.10px;top:134.20px;font-size:11.6px;line-height:16px;color:#d9d9d9;letter-spacing:-0.108px;">Stroke style</span>
<div style="left:1158.6px;top:148.8px;width:82.7px;height:2px;background:#2555a3;"></div>
<span class="t" style="left:1030.50px;top:161.60px;font-size:11.6px;line-height:16px;color:#d9d9d9;letter-spacing:0.154px;">Width:</span>
<div style="left:1077.6px;top:158px;width:77.60000000000014px;height:23px;background:#292929;border-radius:4px;border:1px solid #262626;"></div>
<span class="t" style="left:1083.60px;top:161.60px;font-size:11.9px;line-height:16px;color:#e2e2e2;letter-spacing:-0.176px;">0.026</span>
<svg style="left:1133.1px;top:164.29999999999998px" width="10" height="10" viewBox="-5 -5 10 10"><path d="M-4 0H4" stroke="#e6e6e6" stroke-width="1.600"/></svg>
<svg style="left:1145px;top:164.29999999999998px" width="10" height="10" viewBox="-5 -5 10 10"><path d="M-4 0H4M0 -4V4" stroke="#e6e6e6" stroke-width="1.600"/></svg>
<div style="left:1159.2px;top:158px;width:63.59999999999991px;height:23px;background:#292929;border-radius:4px;border:1px solid #242424;border-bottom:2px solid #222;"></div>
<span class="t" style="left:1166.20px;top:162.00px;font-size:11.9px;line-height:16px;color:#e2e2e2;letter-spacing:-0.013px;">mm</span>
<svg style="left:1205.5px;top:165px" width="12" height="10" viewBox="-6 -5 12 10"><path d="M-3.2 -1.9L0 1.9L3.2 -1.9" stroke="#e6e6e6" stroke-width="1.6" fill="none"/></svg>
<span class="t" style="left:1030.50px;top:188.30px;font-size:11.6px;line-height:16px;color:#d9d9d9;letter-spacing:-0.394px;">Dashes:</span>
<div style="left:1077.6px;top:186px;width:88.60000000000014px;height:20px;background:#292929;border-radius:4px;border:1px solid #242424;border-bottom:2px solid #222;"></div>
<div style="left:1083.6px;top:195.2px;width:66.6px;height:1.8px;background:#f2f2f2;"></div>
<svg style="left:1149px;top:191.5px" width="12" height="10" viewBox="-6 -5 12 10"><path d="M-3.2 -1.9L0 1.9L3.2 -1.9" stroke="#e6e6e6" stroke-width="1.6" fill="none"/></svg>
<div style="left:1170.7px;top:186px;width:53.09999999999991px;height:20px;background:#292929;border-radius:4px;border:1px solid #262626;"></div>
<span class="t" style="left:1175.70px;top:188.30px;font-size:11.9px;line-height:16px;color:#e2e2e2;letter-spacing:-0.215px;">0.00</span>
<svg style="left:1202.4px;top:191.0px" width="10" height="10" viewBox="-5 -5 10 10"><path d="M-4 0H4" stroke="#5a5a5a" stroke-width="1.600"/></svg>
<svg style="left:1214.4px;top:191.0px" width="10" height="10" viewBox="-5 -5 10 10"><path d="M-4 0H4M0 -4V4" stroke="#e6e6e6" stroke-width="1.600"/></svg>
<span class="t" style="left:1030.50px;top:216.70px;font-size:11.6px;line-height:16px;color:#d9d9d9;letter-spacing:-0.189px;">Markers:</span>
<div style="left:1077.6px;top:211.5px;width:46.40000000000009px;height:26.19999999999999px;background:#292929;border-radius:4px;border:1px solid #242424;border-bottom:2px solid #222;"></div>
<div style="left:1083.6px;top:224.3px;width:24.90000000000009px;height:1px;background:#8d8d8d;"></div>
<svg style="left:1109.8px;top:220px" width="12" height="10" viewBox="-6 -5 12 10"><path d="M-3.2 -1.9L0 1.9L3.2 -1.9" stroke="#e6e6e6" stroke-width="1.6" fill="none"/></svg>
<div style="left:1128px;top:211.5px;width:46.09999999999991px;height:26.19999999999999px;background:#292929;border-radius:4px;border:1px solid #242424;border-bottom:2px solid #222;"></div>
<div style="left:1133.3px;top:224.3px;width:25.90000000000009px;height:1px;background:#8d8d8d;"></div>
<svg style="left:1160.2px;top:220px" width="12" height="10" viewBox="-6 -5 12 10"><path d="M-3.2 -1.9L0 1.9L3.2 -1.9" stroke="#e6e6e6" stroke-width="1.6" fill="none"/></svg>
<div style="left:1179.1px;top:211.5px;width:45.100000000000136px;height:26.19999999999999px;background:#292929;border-radius:4px;border:1px solid #242424;border-bottom:2px solid #222;"></div>
<div style="left:1184px;top:224.3px;width:25.5px;height:1px;background:#8d8d8d;"></div>
<svg style="left:1210.3px;top:220px" width="12" height="10" viewBox="-6 -5 12 10"><path d="M-3.2 -1.9L0 1.9L3.2 -1.9" stroke="#e6e6e6" stroke-width="1.6" fill="none"/></svg>
<span class="t" style="left:1030.50px;top:245.60px;font-size:11.6px;line-height:16px;color:#d9d9d9;letter-spacing:-0.441px;">Join:</span>
<div style="left:1078px;top:242px;width:21.7px;height:21.80000000000001px;background:#2a2a2a;border-radius:3px;border:1px solid #232323;border-bottom:2px solid #202020;"></div>
<svg style="left:1080.1px;top:243.7px" width="18" height="18" viewBox="-9.0 -9.0 18 18"><path d="M-7.100 7.100V-3.100L-3.100 -7.100H7.100V2.400H2V7.100Z" fill="#f4f4f4"/><path d="M-2.600 7.100V-2.600H7.100" stroke="#3c3c3c" stroke-width="1.300" stroke-dasharray="1 1" fill="none"/></svg>
<div style="left:1104.2px;top:242px;width:21.7px;height:21.80000000000001px;background:#2a2a2a;border-radius:3px;border:1px solid #232323;border-bottom:2px solid #202020;"></div>
<svg style="left:1106.3px;top:243.7px" width="18" height="18" viewBox="-9.0 -9.0 18 18"><path d="M-7.100 7.100V-2.100A5 5 0 0 1 -2.100 -7.100H7.100V2.400H2V7.100Z" fill="#f4f4f4"/><path d="M-2.600 7.100V-2.600H7.100" stroke="#3c3c3c" stroke-width="1.300" stroke-dasharray="1 1" fill="none"/></svg>
<div style="left:1130.2px;top:242px;width:21.7px;height:21.80000000000001px;background:#1f4c91;border-radius:3px;"></div>
<svg style="left:1132.3px;top:243.7px" width="18" height="18" viewBox="-9.0 -9.0 18 18"><path d="M-7.100 7.100V-7.100H7.100V2.400H2V7.100Z" fill="#f4f4f4"/><path d="M-2.600 7.100V-2.600H7.100" stroke="#3c3c3c" stroke-width="1.300" stroke-dasharray="1 1" fill="none"/></svg>
<div style="left:1156.6px;top:242px;width:67.60000000000014px;height:23px;background:#292929;border-radius:4px;border:1px solid #262626;"></div>
<span class="t" style="left:1162.60px;top:245.60px;font-size:11.9px;line-height:16px;color:#e2e2e2;letter-spacing:-0.265px;">4.00</span>
<svg style="left:1202.7px;top:248.29999999999998px" width="10" height="10" viewBox="-5 -5 10 10"><path d="M-4 0H4" stroke="#e6e6e6" stroke-width="1.600"/></svg>
<svg style="left:1214.4px;top:248.29999999999998px" width="10" height="10" viewBox="-5 -5 10 10"><path d="M-4 0H4M0 -4V4" stroke="#e6e6e6" stroke-width="1.600"/></svg>
<span class="t" style="left:1030.50px;top:272.90px;font-size:11.6px;line-height:16px;color:#d9d9d9;letter-spacing:-0.551px;">Cap:</span>
<div style="left:1078px;top:269px;width:21.7px;height:21.80000000000001px;background:#1f4c91;border-radius:3px;"></div>
<svg style="left:1080.0px;top:271.2px" width="18" height="18" viewBox="-9.0 -9.0 18 18"><path d="M-5.600 -3.600H-1.700V6.200H-5.600ZM1.700 -3.600H5.600V6.200H1.700Z" fill="#f4f4f4"/><path d="M0 -3.600V6.200" stroke="#e4e4e4" stroke-width="1.200" stroke-dasharray="1 1"/></svg>
<div style="left:1104.2px;top:269px;width:21.7px;height:21.80000000000001px;background:#2a2a2a;border-radius:3px;border:1px solid #232323;border-bottom:2px solid #202020;"></div>
<svg style="left:1106.2px;top:271.2px" width="18" height="18" viewBox="-9.0 -9.0 18 18"><path d="M-5.500 6.200V-2.900A5.500 5.500 0 0 1 5.500 -2.900V6.200Z" fill="#f4f4f4"/><path d="M-1.700 6.200V-3.600H1.700V6.200Z" fill="#2a2a2a"/><path d="M0 -3.400V6.200" stroke="#f0f0f0" stroke-width="1.200" stroke-dasharray="1 1"/></svg>
<div style="left:1130.2px;top:269px;width:21.7px;height:21.80000000000001px;background:#2a2a2a;border-radius:3px;border:1px solid #232323;border-bottom:2px solid #202020;"></div>
<svg style="left:1132.2px;top:271.2px" width="18" height="18" viewBox="-9.0 -9.0 18 18"><path d="M-5.500 6.200V-6.500H5.500V6.200Z" fill="#f4f4f4"/><path d="M-1.700 6.200V-3.600H1.700V6.200Z" fill="#2a2a2a"/><path d="M0 -3.400V6.200" stroke="#f0f0f0" stroke-width="1.200" stroke-dasharray="1 1"/></svg>
<span class="t" style="left:1030.50px;top:298.70px;font-size:11.6px;line-height:16px;color:#d9d9d9;letter-spacing:-0.046px;">Order:</span>
<div style="left:1078px;top:295.3px;width:21.7px;height:21.399999999999977px;background:#2a2a2a;border-radius:3px;border:1px solid #232323;border-bottom:2px solid #202020;"></div>
<svg style="left:1079.0px;top:295.8px" width="20" height="20" viewBox="-10.0 -10.0 20 20"><rect x="-4" y="-4.200" width="12.500" height="12" fill="#f6f6f6"/><rect x="0.500" y="0.200" width="8" height="7.600" fill="#f0148c"/><circle cx="-2.600" cy="-2.100" r="5.700" fill="#10a0ee"/></svg>
<div style="left:1078px;top:322.2px;width:21.7px;height:21.80000000000001px;background:#2a2a2a;border-radius:3px;border:1px solid #232323;border-bottom:2px solid #202020;"></div>
<svg style="left:1079.0px;top:322.9px" width="20" height="20" viewBox="-10.0 -10.0 20 20"><circle cx="-2.600" cy="-2.100" r="5.700" fill="#10a0ee"/><rect x="-4" y="-4.200" width="12.500" height="12" fill="#f6f6f6"/><rect x="0.500" y="0.200" width="8" height="7.600" fill="#f0148c"/></svg>
<div style="left:1104.2px;top:295.3px;width:21.7px;height:21.399999999999977px;background:#2a2a2a;border-radius:3px;border:1px solid #232323;border-bottom:2px solid #202020;"></div>
<svg style="left:1105.2px;top:295.8px" width="20" height="20" viewBox="-10.0 -10.0 20 20"><rect x="-4" y="-4.200" width="12.500" height="12" fill="#f6f6f6"/><rect x="-1.700" y="-2" width="10.200" height="9.800" fill="#f0148c"/><circle cx="-2.600" cy="-2.100" r="5.700" fill="#10a0ee"/></svg>
<div style="left:1104.2px;top:322.2px;width:21.7px;height:21.80000000000001px;background:#2a2a2a;border-radius:3px;border:1px solid #232323;border-bottom:2px solid #202020;"></div>
<svg style="left:1105.2px;top:322.9px" width="20" height="20" viewBox="-10.0 -10.0 20 20"><rect x="-4" y="-4.200" width="12.500" height="12" fill="#f6f6f6"/><circle cx="-2.600" cy="-2.100" r="5.700" fill="#10a0ee"/><rect x="-1.700" y="-2" width="10.200" height="9.800" fill="#f0148c"/></svg>
<div style="left:1130.2px;top:295.3px;width:21.7px;height:21.399999999999977px;background:#1f4c91;border-radius:3px;"></div>
<svg style="left:1131.2px;top:295.8px" width="20" height="20" viewBox="-10.0 -10.0 20 20"><circle cx="-2.600" cy="-2.100" r="5.700" fill="#2f7fd2"/><rect x="-4" y="-4.200" width="12.500" height="12" fill="#f6f6f6"/><rect x="0.500" y="0.200" width="8" height="7.600" fill="#f0148c"/></svg>
<div style="left:1130.2px;top:322.2px;width:21.7px;height:21.80000000000001px;background:#2a2a2a;border-radius:3px;border:1px solid #232323;border-bottom:2px solid #202020;"></div>
<svg style="left:1131.2px;top:322.9px" width="20" height="20" viewBox="-10.0 -10.0 20 20"><circle cx="-2.600" cy="-2.100" r="5.700" fill="#1fa5c8"/><rect x="-4" y="-4.200" width="12.500" height="12" fill="#f6f6f6"/><rect x="-1.700" y="-2" width="10.200" height="9.800" fill="#f0148c"/></svg>
<div style="left:1021px;top:660px;width:243px;height:1px;background:#252525;"></div>
<span class="t" style="left:1099.00px;top:667.80px;font-size:11.6px;line-height:16px;color:#d9d9d9;letter-spacing:-0.012px;">Blend mode:</span>
<div style="left:1168.2px;top:664px;width:91.39999999999986px;height:23px;background:#292929;border-radius:4px;border:1px solid #242424;border-bottom:2px solid #222;"></div>
<span class="t" style="left:1175.30px;top:667.80px;font-size:11.6px;line-height:16px;color:#e2e2e2;letter-spacing:0.303px;">Normal</span>
<svg style="left:1243.7px;top:671px" width="12" height="10" viewBox="-6 -5 12 10"><path d="M-3.2 -1.9L0 1.9L3.2 -1.9" stroke="#e6e6e6" stroke-width="1.6" fill="none"/></svg>
<div style="left:1024px;top:691.3px;width:236px;height:17px;background:#282828;border-radius:2px;"></div>
<div style="left:1024px;top:691.3px;width:177.5px;height:17px;background:#232323;border-radius:2px 0 0 2px;"></div>
<span class="t" style="left:1027.40px;top:691.60px;font-size:11.6px;line-height:16px;color:#e6e6e6;letter-spacing:-0.287px;">Blur (%)</span>
<span class="t" style="left:1208.60px;top:691.60px;font-size:11.6px;line-height:16px;color:#e2e2e2;letter-spacing:-0.442px;">0.0</span>
<svg style="left:1238px;top:694.600px" width="22" height="10" viewBox="1238 -5 22 10"><path d="M1240 0H1246.600" stroke="#5a5a5a" stroke-width="1.500"/><path d="M1250.400 0H1258.200M1254.300 -3.900V3.900" stroke="#ececec" stroke-width="1.400"/></svg>
<div style="left:1024px;top:711px;width:236px;height:16px;background:#282828;border-radius:2px;"></div>
<div style="left:1024px;top:711px;width:177.5px;height:16px;background:#1b56ad;border-radius:2px 0 0 2px;"></div>
<span class="t" style="left:1027.40px;top:711.50px;font-size:11.6px;line-height:16px;color:#ffffff;letter-spacing:-0.108px;">Opacity (%)</span>
<span class="t" style="left:1209.00px;top:711.50px;font-size:11.6px;line-height:16px;color:#e2e2e2;letter-spacing:-0.186px;">100.0</span>
<svg style="left:1238px;top:714.500px" width="22" height="10" viewBox="1238 -5 22 10"><path d="M1239.200 0H1247" stroke="#ececec" stroke-width="1.400"/><path d="M1250.400 0H1258.200M1254.300 -3.900V3.900" stroke="#555" stroke-width="1.500"/></svg>
<div style="left:0px;top:736px;width:1223px;height:22px;background:#242424;"></div>
<div style="left:1px;top:736px;width:21.5px;height:22px;background:#ffffff;"></div>
<svg style="left:1px;top:736px" width="21.500" height="22" viewBox="0 0 21.500 22"><path d="M2 2L19.500 20M19.500 2L2 20" stroke="#b3203e" stroke-width="1.500"/></svg>
<div style="left:23px;top:736px;width:22px;height:22px;background:#000000;"></div>
<div style="left:45.5px;top:736px;width:21.8px;height:22px;background:#808080;"></div>
<div style="left:68px;top:736px;width:22px;height:22px;background:#ffffff;"></div>
<svg style="left:0;top:736px" width="1267" height="22" viewBox="0 736 1267 22" ><rect x="90.45" y="736" width="14.21" height="10.10" fill="#1a1a1a"/><rect x="104.96" y="736" width="14.21" height="10.10" fill="#333333"/><rect x="119.47" y="736" width="14.21" height="10.10" fill="#4d4d4d"/><rect x="133.98" y="736" width="14.21" height="10.10" fill="#666666"/><rect x="148.49" y="736" width="14.21" height="10.10" fill="#999999"/><rect x="163.00" y="736" width="14.21" height="10.10" fill="#b3b3b3"/><rect x="177.51" y="736" width="14.21" height="10.10" fill="#cccccc"/><rect x="192.02" y="736" width="14.21" height="10.10" fill="#e6e6e6"/><rect x="206.53" y="736" width="14.21" height="10.10" fill="#ececec"/><rect x="221.04" y="736" width="14.21" height="10.10" fill="#f2f2f2"/><rect x="235.55" y="736" width="14.21" height="10.10" fill="#f9f9f9"/><rect x="250.06" y="736" width="14.21" height="10.10" fill="#800000"/><rect x="264.57" y="736" width="14.21" height="10.10" fill="#ff0000"/><rect x="279.08" y="736" width="14.21" height="10.10" fill="#808000"/><rect x="293.59" y="736" width="14.21" height="10.10" fill="#ffff00"/><rect x="308.10" y="736" width="14.21" height="10.10" fill="#008000"/><rect x="322.61" y="736" width="13.59" height="10.10" fill="#00ff00"/><rect x="336.50" y="736" width="13.55" height="10.10" fill="#008080"/><rect x="350.35" y="736" width="13.55" height="10.10" fill="#00ffff"/><rect x="364.19" y="736" width="13.55" height="10.10" fill="#000080"/><rect x="378.04" y="736" width="13.55" height="10.10" fill="#0000ff"/><rect x="391.89" y="736" width="13.55" height="10.10" fill="#800080"/><rect x="405.74" y="736" width="13.55" height="10.10" fill="#ff00ff"/><rect x="419.59" y="736" width="13.55" height="10.10" fill="#2b0000"/><rect x="433.43" y="736" width="13.55" height="10.10" fill="#550000"/><rect x="447.28" y="736" width="13.55" height="10.10" fill="#800000"/><rect x="461.13" y="736" width="13.55" height="10.10" fill="#aa0000"/><rect x="474.98" y="736" width="13.55" height="10.10" fill="#d40000"/><rect x="488.83" y="736" width="13.55" height="10.10" fill="#ff0000"/><rect x="502.67" y="736" width="13.55" height="10.10" fill="#ff2a2a"/><rect x="516.52" y="736" width="13.55" height="10.10" fill="#ff5555"/><rect x="530.37" y="736" width="13.55" height="10.10" fill="#ff8080"/><rect x="544.22" y="736" width="13.55" height="10.10" fill="#ffaaaa"/><rect x="558.07" y="736" width="13.55" height="10.10" fill="#ffd5d5"/><rect x="571.91" y="736" width="13.55" height="10.10" fill="#280b0b"/><rect x="585.76" y="736" width="13.55" height="10.10" fill="#501616"/><rect x="599.61" y="736" width="13.55" height="10.10" fill="#782121"/><rect x="613.46" y="736" width="13.55" height="10.10" fill="#a02c2c"/><rect x="627.31" y="736" width="13.55" height="10.10" fill="#c83737"/><rect x="641.15" y="736" width="13.55" height="10.10" fill="#d35f5f"/><rect x="655.00" y="736" width="13.55" height="10.10" fill="#de8787"/><rect x="668.85" y="736" width="13.55" height="10.10" fill="#e9afaf"/><rect x="682.70" y="736" width="13.55" height="10.10" fill="#f4d7d7"/><rect x="696.55" y="736" width="13.55" height="10.10" fill="#241c1c"/><rect x="710.39" y="736" width="13.55" height="10.10" fill="#483737"/><rect x="724.24" y="736" width="13.55" height="10.10" fill="#6c5353"/><rect x="738.09" y="736" width="13.55" height="10.10" fill="#916f6f"/><rect x="751.94" y="736" width="13.55" height="10.10" fill="#ac9393"/><rect x="765.79" y="736" width="13.55" height="10.10" fill="#c8b7b7"/><rect x="779.63" y="736" width="13.55" height="10.10" fill="#e3dbdb"/><rect x="793.48" y="736" width="13.55" height="10.10" fill="#2b1100"/><rect x="807.33" y="736" width="13.55" height="10.10" fill="#552200"/><rect x="821.18" y="736" width="13.55" height="10.10" fill="#803300"/><rect x="835.03" y="736" width="13.55" height="10.10" fill="#aa4400"/><rect x="848.87" y="736" width="13.55" height="10.10" fill="#d45500"/><rect x="862.72" y="736" width="13.55" height="10.10" fill="#ff6600"/><rect x="876.57" y="736" width="13.55" height="10.10" fill="#ff7f2a"/><rect x="890.42" y="736" width="13.55" height="10.10" fill="#ff9955"/><rect x="904.27" y="736" width="13.55" height="10.10" fill="#ffb380"/><rect x="918.11" y="736" width="13.55" height="10.10" fill="#ffccaa"/><rect x="931.96" y="736" width="13.55" height="10.10" fill="#ffe6d5"/><rect x="945.81" y="736" width="13.55" height="10.10" fill="#28170b"/><rect x="959.66" y="736" width="13.55" height="10.10" fill="#502d16"/><rect x="973.51" y="736" width="13.55" height="10.10" fill="#784421"/><rect x="987.35" y="736" width="13.55" height="10.10" fill="#a05a2c"/><rect x="1001.20" y="736" width="13.55" height="10.10" fill="#c87137"/><rect x="1015.05" y="736" width="13.55" height="10.10" fill="#d38d5f"/><rect x="1028.90" y="736" width="13.55" height="10.10" fill="#deaa87"/><rect x="1042.75" y="736" width="13.55" height="10.10" fill="#e9c6af"/><rect x="1056.59" y="736" width="13.55" height="10.10" fill="#f4e3d7"/><rect x="1070.44" y="736" width="13.55" height="10.10" fill="#241f1c"/><rect x="1084.29" y="736" width="13.55" height="10.10" fill="#483e37"/><rect x="1098.14" y="736" width="13.55" height="10.10" fill="#6c5d53"/><rect x="1111.99" y="736" width="13.55" height="10.10" fill="#917c6f"/><rect x="1125.83" y="736" width="13.55" height="10.10" fill="#ac9d93"/><rect x="1139.68" y="736" width="13.55" height="10.10" fill="#c8beb7"/><rect x="1153.53" y="736" width="13.55" height="10.10" fill="#e3dedb"/><rect x="1167.38" y="736" width="13.55" height="10.10" fill="#2b2200"/><rect x="1181.23" y="736" width="13.55" height="10.10" fill="#554400"/><rect x="1195.07" y="736" width="13.55" height="10.10" fill="#806600"/><rect x="1208.92" y="736" width="13.55" height="10.10" fill="#aa8800"/><rect x="90.45" y="746.6999999999999" width="14.21" height="11.30" fill="#d4aa00"/><rect x="104.96" y="746.6999999999999" width="14.21" height="11.30" fill="#ffcc00"/><rect x="119.47" y="746.6999999999999" width="14.21" height="11.30" fill="#ffd42a"/><rect x="133.98" y="746.6999999999999" width="14.21" height="11.30" fill="#ffdd55"/><rect x="148.49" y="746.6999999999999" width="14.21" height="11.30" fill="#ffe680"/><rect x="163.00" y="746.6999999999999" width="14.21" height="11.30" fill="#ffeeaa"/><rect x="177.51" y="746.6999999999999" width="14.21" height="11.30" fill="#fff6d5"/><rect x="192.02" y="746.6999999999999" width="14.21" height="11.30" fill="#28220b"/><rect x="206.53" y="746.6999999999999" width="14.21" height="11.30" fill="#504416"/><rect x="221.04" y="746.6999999999999" width="14.21" height="11.30" fill="#786621"/><rect x="235.55" y="746.6999999999999" width="14.21" height="11.30" fill="#a0892c"/><rect x="250.06" y="746.6999999999999" width="14.21" height="11.30" fill="#c8ab37"/><rect x="264.57" y="746.6999999999999" width="14.21" height="11.30" fill="#d3bc5f"/><rect x="279.08" y="746.6999999999999" width="14.21" height="11.30" fill="#decd87"/><rect x="293.59" y="746.6999999999999" width="14.21" height="11.30" fill="#e9ddaf"/><rect x="308.10" y="746.6999999999999" width="14.21" height="11.30" fill="#f4eed7"/><rect x="322.61" y="746.6999999999999" width="13.59" height="11.30" fill="#24221c"/><rect x="336.50" y="746.6999999999999" width="13.55" height="11.30" fill="#484537"/><rect x="350.35" y="746.6999999999999" width="13.55" height="11.30" fill="#6c6753"/><rect x="364.19" y="746.6999999999999" width="13.55" height="11.30" fill="#918a6f"/><rect x="378.04" y="746.6999999999999" width="13.55" height="11.30" fill="#aca793"/><rect x="391.89" y="746.6999999999999" width="13.55" height="11.30" fill="#c8c4b7"/><rect x="405.74" y="746.6999999999999" width="13.55" height="11.30" fill="#e3e2db"/><rect x="419.59" y="746.6999999999999" width="13.55" height="11.30" fill="#222b00"/><rect x="433.43" y="746.6999999999999" width="13.55" height="11.30" fill="#445500"/><rect x="447.28" y="746.6999999999999" width="13.55" height="11.30" fill="#668000"/><rect x="461.13" y="746.6999999999999" width="13.55" height="11.30" fill="#88aa00"/><rect x="474.98" y="746.6999999999999" width="13.55" height="11.30" fill="#aad400"/><rect x="488.83" y="746.6999999999999" width="13.55" height="11.30" fill="#ccff00"/><rect x="502.67" y="746.6999999999999" width="13.55" height="11.30" fill="#d4ff2a"/><rect x="516.52" y="746.6999999999999" width="13.55" height="11.30" fill="#ddff55"/><rect x="530.37" y="746.6999999999999" width="13.55" height="11.30" fill="#e5ff80"/><rect x="544.22" y="746.6999999999999" width="13.55" height="11.30" fill="#eeffaa"/><rect x="558.07" y="746.6999999999999" width="13.55" height="11.30" fill="#f6ffd5"/><rect x="571.91" y="746.6999999999999" width="13.55" height="11.30" fill="#22280b"/><rect x="585.76" y="746.6999999999999" width="13.55" height="11.30" fill="#445016"/><rect x="599.61" y="746.6999999999999" width="13.55" height="11.30" fill="#667821"/><rect x="613.46" y="746.6999999999999" width="13.55" height="11.30" fill="#89a02c"/><rect x="627.31" y="746.6999999999999" width="13.55" height="11.30" fill="#abc837"/><rect x="641.15" y="746.6999999999999" width="13.55" height="11.30" fill="#bcd35f"/><rect x="655.00" y="746.6999999999999" width="13.55" height="11.30" fill="#cdde87"/><rect x="668.85" y="746.6999999999999" width="13.55" height="11.30" fill="#dde9af"/><rect x="682.70" y="746.6999999999999" width="13.55" height="11.30" fill="#eef4d7"/><rect x="696.55" y="746.6999999999999" width="13.55" height="11.30" fill="#22241c"/><rect x="710.39" y="746.6999999999999" width="13.55" height="11.30" fill="#454837"/><rect x="724.24" y="746.6999999999999" width="13.55" height="11.30" fill="#676c53"/><rect x="738.09" y="746.6999999999999" width="13.55" height="11.30" fill="#8a916f"/><rect x="751.94" y="746.6999999999999" width="13.55" height="11.30" fill="#a7ac93"/><rect x="765.79" y="746.6999999999999" width="13.55" height="11.30" fill="#c4c8b7"/><rect x="779.63" y="746.6999999999999" width="13.55" height="11.30" fill="#e2e3db"/><rect x="793.48" y="746.6999999999999" width="13.55" height="11.30" fill="#112b00"/><rect x="807.33" y="746.6999999999999" width="13.55" height="11.30" fill="#225500"/><rect x="821.18" y="746.6999999999999" width="13.55" height="11.30" fill="#338000"/><rect x="835.03" y="746.6999999999999" width="13.55" height="11.30" fill="#44aa00"/><rect x="848.87" y="746.6999999999999" width="13.55" height="11.30" fill="#55d400"/><rect x="862.72" y="746.6999999999999" width="13.55" height="11.30" fill="#66ff00"/><rect x="876.57" y="746.6999999999999" width="13.55" height="11.30" fill="#7fff2a"/><rect x="890.42" y="746.6999999999999" width="13.55" height="11.30" fill="#99ff55"/><rect x="904.27" y="746.6999999999999" width="13.55" height="11.30" fill="#b3ff80"/><rect x="918.11" y="746.6999999999999" width="13.55" height="11.30" fill="#ccffaa"/><rect x="931.96" y="746.6999999999999" width="13.55" height="11.30" fill="#e5ffd5"/><rect x="945.81" y="746.6999999999999" width="13.55" height="11.30" fill="#17280b"/><rect x="959.66" y="746.6999999999999" width="13.55" height="11.30" fill="#2d5016"/><rect x="973.51" y="746.6999999999999" width="13.55" height="11.30" fill="#447821"/><rect x="987.35" y="746.6999999999999" width="13.55" height="11.30" fill="#5aa02c"/><rect x="1001.20" y="746.6999999999999" width="13.55" height="11.30" fill="#71c837"/><rect x="1015.05" y="746.6999999999999" width="13.55" height="11.30" fill="#8dd35f"/><rect x="1028.90" y="746.6999999999999" width="13.55" height="11.30" fill="#aade87"/><rect x="1042.75" y="746.6999999999999" width="13.55" height="11.30" fill="#c6e9af"/><rect x="1056.59" y="746.6999999999999" width="13.55" height="11.30" fill="#e3f4d7"/><rect x="1070.44" y="746.6999999999999" width="13.55" height="11.30" fill="#1f241c"/><rect x="1084.29" y="746.6999999999999" width="13.55" height="11.30" fill="#3e4837"/><rect x="1098.14" y="746.6999999999999" width="13.55" height="11.30" fill="#5d6c53"/><rect x="1111.99" y="746.6999999999999" width="13.55" height="11.30" fill="#7c916f"/><rect x="1125.83" y="746.6999999999999" width="13.55" height="11.30" fill="#9dac93"/><rect x="1139.68" y="746.6999999999999" width="13.55" height="11.30" fill="#bec8b7"/><rect x="1153.53" y="746.6999999999999" width="13.55" height="11.30" fill="#dee3db"/><rect x="1167.38" y="746.6999999999999" width="13.55" height="11.30" fill="#002b00"/><rect x="1181.23" y="746.6999999999999" width="13.55" height="11.30" fill="#005500"/><rect x="1195.07" y="746.6999999999999" width="13.55" height="11.30" fill="#008000"/><rect x="1208.92" y="746.6999999999999" width="13.55" height="11.30" fill="#00aa00"/></svg>
<svg style="left:1224px;top:740px" width="43" height="16" viewBox="1224 740 43 16"><path d="M1226.200 749.500L1229.700 746L1233.200 749.500" stroke="#6a6a6a" stroke-width="1.500" fill="none"/><path d="M1241.700 744.200L1245.500 748L1249.300 744.200" stroke="#f0f0f0" stroke-width="1.600" fill="none"/><path d="M1255.500 745.700H1263.800M1255.500 748.700H1263.800M1255.500 751.700H1263.800" stroke="#f0f0f0" stroke-width="1.300"/></svg>
<span class="t" style="left:19.90px;top:760.00px;font-size:11.6px;line-height:16px;color:#dcdcdc;letter-spacing:-0.588px;">Fill:</span>
<span class="t" style="left:51.50px;top:760.00px;font-size:11.6px;line-height:16px;color:#dcdcdc;letter-spacing:-0.158px;font-style:italic;">None</span>
<div style="left:141px;top:760px;width:48.5px;height:12px;background:#292929;border-radius:3px 3px 0 0;"></div>
<div style="left:197px;top:766.5px;width:2.5px;height:3px;background:#3b78d8;border-radius:1px;"></div>
<span class="t" style="left:1024.00px;top:760.00px;font-size:11.6px;line-height:16px;color:#dcdcdc;letter-spacing:-0.980px;">X:</span>
<span class="t" style="left:1047.50px;top:760.00px;font-size:11.6px;line-height:16px;color:#dcdcdc;letter-spacing:-0.006px;">61.87</span>
<div style="left:1097px;top:760px;width:67.5px;height:12px;background:#292929;border-radius:3px 3px 0 0;"></div>
<div style="left:1184.5px;top:760px;width:76px;height:12px;background:#292929;border-radius:3px 3px 0 0;"></div>
<div style="left:28px;top:44px;width:311px;height:507px;background:#2d2d2d;border:1px solid #212121;border-top-color:#282828;"></div>
<span class="t" style="left:46.90px;top:48.00px;font-size:11.6px;line-height:16px;color:#d9d9d9;letter-spacing:0.142px;">Undo</span>
<span class="t" style="left:300.40px;top:48.00px;font-size:11.6px;line-height:16px;color:#959595;letter-spacing:0.033px;">Ctrl+Z</span>
<span class="t" style="left:46.90px;top:70.00px;font-size:11.6px;line-height:16px;color:#6f6f6f;letter-spacing:-0.508px;">Redo</span>
<span class="t" style="left:268.30px;top:70.00px;font-size:11.6px;line-height:16px;color:#5e5e5e;letter-spacing:0.193px;">Shift+Ctrl+Z</span>
<span class="t" style="left:46.90px;top:92.00px;font-size:11.6px;line-height:16px;color:#d9d9d9;letter-spacing:0.130px;">Undo History...</span>
<span class="t" style="left:266.80px;top:92.00px;font-size:11.6px;line-height:16px;color:#959595;letter-spacing:0.210px;">Shift+Ctrl+H</span>
<span class="t" style="left:46.90px;top:114.00px;font-size:11.6px;line-height:16px;color:#d9d9d9;letter-spacing:-0.317px;">Cut</span>
<span class="t" style="left:299.60px;top:114.00px;font-size:11.6px;line-height:16px;color:#959595;letter-spacing:0.058px;">Ctrl+X</span>
<span class="t" style="left:46.90px;top:136.00px;font-size:11.6px;line-height:16px;color:#d9d9d9;letter-spacing:0.055px;">Copy</span>
<span class="t" style="left:300.00px;top:136.00px;font-size:11.6px;line-height:16px;color:#959595;letter-spacing:-0.115px;">Ctrl+C</span>
<span class="t" style="left:46.90px;top:158.00px;font-size:11.6px;line-height:16px;color:#d9d9d9;letter-spacing:-0.473px;">Paste</span>
<span class="t" style="left:300.00px;top:158.00px;font-size:11.6px;line-height:16px;color:#959595;letter-spacing:-0.009px;">Ctrl+V</span>
<span class="t" style="left:46.90px;top:180.00px;font-size:11.6px;line-height:16px;color:#d9d9d9;letter-spacing:-0.604px;">Paste...</span>
<svg style="left:326.5px;top:183px" width="7" height="10" viewBox="0 0 7 10"><path d="M2 1.700L5.300 5L2 8.300" stroke="#e4e4e4" stroke-width="1.400" fill="none"/></svg>
<span class="t" style="left:46.90px;top:202.00px;font-size:11.6px;line-height:16px;color:#d9d9d9;letter-spacing:-0.235px;">Find/Replace...</span>
<span class="t" style="left:301.20px;top:202.00px;font-size:11.6px;line-height:16px;color:#959595;letter-spacing:-0.100px;">Ctrl+F</span>
<span class="t" style="left:46.90px;top:224.00px;font-size:11.6px;line-height:16px;color:#d9d9d9;letter-spacing:0.060px;">Duplicate</span>
<span class="t" style="left:298.80px;top:224.00px;font-size:11.6px;line-height:16px;color:#959595;letter-spacing:0.085px;">Ctrl+D</span>
<div style="left:28.3px;top:241.8px;width:309.7px;height:22px;background:#1b56ad;"></div>
<span class="t" style="left:46.90px;top:246.00px;font-size:11.6px;line-height:16px;color:#ffffff;letter-spacing:-0.162px;">Clone</span>
<svg style="left:326.5px;top:248.5px" width="7" height="10" viewBox="0 0 7 10"><path d="M2 1.700L5.300 5L2 8.300" stroke="#ffffff" stroke-width="1.400" fill="none"/></svg>
<span class="t" style="left:46.90px;top:268.30px;font-size:11.6px;line-height:16px;color:#d9d9d9;letter-spacing:0.035px;">Make a Bitmap Copy</span>
<span class="t" style="left:303.50px;top:268.30px;font-size:11.6px;line-height:16px;color:#959595;letter-spacing:0.190px;">Alt+B</span>
<span class="t" style="left:46.90px;top:290.30px;font-size:11.6px;line-height:16px;color:#d9d9d9;letter-spacing:-0.155px;">Delete</span>
<span class="t" style="left:299.60px;top:290.30px;font-size:11.6px;line-height:16px;color:#959595;letter-spacing:-0.105px;">Delete</span>
<span class="t" style="left:46.90px;top:312.30px;font-size:11.6px;line-height:16px;color:#d9d9d9;letter-spacing:-0.102px;">Select All</span>
<span class="t" style="left:46.90px;top:334.30px;font-size:11.6px;line-height:16px;color:#d9d9d9;letter-spacing:-0.099px;">Select All in All Layers</span>
<span class="t" style="left:276.50px;top:334.30px;font-size:11.6px;line-height:16px;color:#959595;letter-spacing:0.314px;">Ctrl+Alt+A</span>
<span class="t" style="left:46.90px;top:356.30px;font-size:11.6px;line-height:16px;color:#d9d9d9;letter-spacing:-0.306px;">Select Same</span>
<svg style="left:326.5px;top:359.3px" width="7" height="10" viewBox="0 0 7 10"><path d="M2 1.700L5.300 5L2 8.300" stroke="#e4e4e4" stroke-width="1.400" fill="none"/></svg>
<span class="t" style="left:46.90px;top:378.30px;font-size:11.6px;line-height:16px;color:#d9d9d9;letter-spacing:-0.022px;">Invert Selection</span>
<span class="t" style="left:330.00px;top:378.30px;font-size:11.6px;line-height:16px;color:#959595;">!</span>
<span class="t" style="left:46.90px;top:400.30px;font-size:11.6px;line-height:16px;color:#d9d9d9;letter-spacing:-0.192px;">Deselect</span>
<span class="t" style="left:297.00px;top:400.30px;font-size:11.6px;line-height:16px;color:#959595;letter-spacing:-0.532px;">Escape</span>
<span class="t" style="left:46.90px;top:422.30px;font-size:11.6px;line-height:16px;color:#d9d9d9;letter-spacing:-0.213px;">Resize Page to Selection</span>
<span class="t" style="left:267.60px;top:422.30px;font-size:11.6px;line-height:16px;color:#959595;letter-spacing:0.143px;">Shift+Ctrl+R</span>
<span class="t" style="left:46.90px;top:444.30px;font-size:11.6px;line-height:16px;color:#d9d9d9;letter-spacing:-0.050px;">Create Guides Around the Current Page</span>
<span class="t" style="left:46.90px;top:466.30px;font-size:11.6px;line-height:16px;color:#d9d9d9;letter-spacing:-0.110px;">Lock All Guides</span>
<div style="left:31.5px;top:469.1px;width:10.5px;height:10.5px;background:transparent;border:1px solid #a8a8a8;border-radius:2px;"></div>
<span class="t" style="left:46.90px;top:488.30px;font-size:11.6px;line-height:16px;color:#d9d9d9;letter-spacing:-0.070px;">Delete All Guides</span>
<span class="t" style="left:46.90px;top:510.30px;font-size:11.6px;line-height:16px;color:#d9d9d9;letter-spacing:-0.083px;">XML Editor...</span>
<span class="t" style="left:267.60px;top:510.30px;font-size:11.6px;line-height:16px;color:#959595;letter-spacing:0.197px;">Shift+Ctrl+X</span>
<span class="t" style="left:46.90px;top:532.30px;font-size:11.6px;line-height:16px;color:#d9d9d9;letter-spacing:-0.313px;">Preferences</span>
<svg style="left:31.500px;top:534.40px" width="12" height="12" viewBox="-6 -6 12 12"><path d="M-3.400 -3.400L3.400 3.400" stroke="#ececec" stroke-width="1.700"/><circle cx="-3.700" cy="-3.700" r="2.100" fill="#ececec"/><path d="M-3.900 -3.900L-6.500 -5.200L-5.200 -6.500Z" fill="#2d2d2d" stroke="#2d2d2d" stroke-width="0.900"/><circle cx="3.700" cy="3.700" r="2.100" fill="#ececec"/><path d="M3.900 3.900L6.500 5.200L5.200 6.500Z" fill="#2d2d2d" stroke="#2d2d2d" stroke-width="0.900"/><path d="M4.800 -4.800L0.800 -0.800" stroke="#ececec" stroke-width="1.200" stroke-linecap="round"/><path d="M-1.300 1.300L-4.400 4.400" stroke="#ececec" stroke-width="2.300" stroke-linecap="round"/></svg>
<div style="left:338px;top:242px;width:233px;height:153.5px;background:#2d2d2d;border:1px solid #202020;"></div>
<span class="t" style="left:357.60px;top:246.20px;font-size:11.6px;line-height:16px;color:#d9d9d9;letter-spacing:-0.179px;">Create Clone</span>
<span class="t" style="left:534.20px;top:246.20px;font-size:11.6px;line-height:16px;color:#959595;letter-spacing:0.342px;">Alt+D</span>
<div style="left:338px;top:264px;width:232px;height:22px;background:#1b56ad;"></div>
<span class="t" style="left:357.60px;top:267.92px;font-size:11.6px;line-height:16px;color:#ffffff;letter-spacing:-0.197px;">Create Tiled Clones...</span>
<span class="t" style="left:357.60px;top:289.64px;font-size:11.6px;line-height:16px;color:#d9d9d9;letter-spacing:-0.014px;">Unlink Clone</span>
<span class="t" style="left:502.00px;top:289.64px;font-size:11.6px;line-height:16px;color:#959595;letter-spacing:0.357px;">Shift+Alt+D</span>
<span class="t" style="left:357.60px;top:311.36px;font-size:11.6px;line-height:16px;color:#d9d9d9;letter-spacing:0.071px;">Unlink Clones recursively</span>
<span class="t" style="left:357.60px;top:333.08px;font-size:11.6px;line-height:16px;color:#d9d9d9;letter-spacing:0.012px;">Relink to Copied</span>
<span class="t" style="left:357.60px;top:354.80px;font-size:11.6px;line-height:16px;color:#d9d9d9;letter-spacing:-0.056px;">Select Original</span>
<span class="t" style="left:524.90px;top:354.80px;font-size:11.6px;line-height:16px;color:#959595;letter-spacing:0.191px;">Shift+D</span>
<span class="t" style="left:357.60px;top:376.52px;font-size:11.6px;line-height:16px;color:#d9d9d9;letter-spacing:-0.104px;">Clone original path (LPE)</span>
<div style="left:195.7px;top:300.3px;width:456.6px;height:33.2px;background:rgba(2,2,2,0.860);border-radius:4px;"></div>
<span class="t" style="left:204.70px;top:310.40px;font-size:11.8px;line-height:16px;color:#f2f2f2;letter-spacing:0.016px;">Create multiple clones of selected object, arranging them into a pattern or scattering</span>
<svg style="left:410.900px;top:270.500px" width="14" height="20" viewBox="-1 -1 14 20"><path d="M0 0V13.600L3.100 10.700L5.300 16.200L7.400 15.300L5.200 10H9.900Z" fill="#fff" stroke="#111" stroke-width="0.900" stroke-linejoin="round"/></svg>
</div></body></html>
